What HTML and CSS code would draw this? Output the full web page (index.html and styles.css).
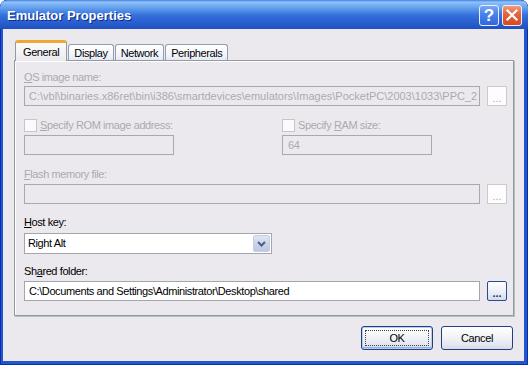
FILE: index.html
```html
<!DOCTYPE html>
<html>
<head>
<meta charset="utf-8">
<link rel="stylesheet" href="styles.css">
</head>
<body>
<div class="window">
  <div class="titlebar">
    <span class="title">Emulator Properties</span>
    <div class="caption-btns">
      <div class="cbtn help">?</div>
      <div class="cbtn close">
        <svg width="18" height="19" viewBox="0 0 18 19"><path d="M4.5 4.5 L13.5 13.5 M13.5 4.5 L4.5 13.5" stroke="#fff" stroke-width="2.2" stroke-linecap="square" fill="none"/></svg>
      </div>
    </div>
  </div>
  <div class="client">
    <div class="tabs">
      <div class="tab active">General</div>
      <div class="tab">Display</div>
      <div class="tab">Network</div>
      <div class="tab">Peripherals</div>
    </div>
    <div class="panel">
      <div class="group g-os">
        <div class="label disabled"><u>O</u>S image name:</div>
        <div class="row">
          <div class="field disabled path">C:\vbl\binaries.x86ret\bin\i386\smartdevices\emulators\Images\PocketPC\2003\1033\PPC_2</div>
          <div class="browse disabled">...</div>
        </div>
      </div>
      <div class="group g-mem">
        <div class="col">
          <div class="check-row"><span class="checkbox"></span><span class="label disabled"><u>S</u>pecify ROM image address:</span></div>
          <div class="field short disabled"></div>
        </div>
        <div class="col">
          <div class="check-row"><span class="checkbox"></span><span class="label disabled">Specify <u>R</u>AM size:</span></div>
          <div class="field short disabled">64</div>
        </div>
      </div>
      <div class="group g-flash">
        <div class="label disabled"><u>F</u>lash memory file:</div>
        <div class="row">
          <div class="field disabled"></div>
          <div class="browse disabled">...</div>
        </div>
      </div>
      <div class="group g-host">
        <div class="label"><u>H</u>ost key:</div>
        <div class="combo">
          <span class="combo-text">Right Alt</span>
          <span class="combo-btn">
            <svg width="9" height="6" viewBox="0 0 9 6"><path d="M1 1 L4.5 4.5 L8 1" stroke="#4d5f82" stroke-width="2" fill="none"/></svg>
          </span>
        </div>
      </div>
      <div class="group g-shared">
        <div class="label">Sh<u>a</u>red folder:</div>
        <div class="row">
          <div class="field enabled">C:\Documents and Settings\Administrator\Desktop\shared</div>
          <div class="browse enabled">...</div>
        </div>
      </div>
    </div>
    <div class="buttons">
      <div class="btn default"><span class="focus">OK</span></div>
      <div class="btn">Cancel</div>
    </div>
  </div>
</div>
</body>
</html>
```
FILE: styles.css
```css
* { box-sizing: border-box; }
html, body { margin: 0; padding: 0; background: #ffffff; }
body { font-family: "Liberation Sans", Arial, sans-serif; font-size: 11px; letter-spacing: -0.4px; color: #000; }

.window {
  width: 528px;
  height: 365px;
  display: flex;
  flex-direction: column;
  background: #2256cf;
  border-radius: 7px 7px 0 0;
  box-shadow: inset 0 0 0 1px #0a2fa8;
  overflow: hidden;
}

.titlebar {
  height: 29px;
  flex: none;
  display: flex;
  align-items: center;
  padding: 2px 6px 0 7px;
  background: linear-gradient(to bottom, #3b7fe8 0px, #93c2f6 2px, #80b5f3 4px, #6aa5ef 7px, #4d8ce6 11px, #3771dc 15px, #2c63d3 20px, #2659ca 25px, #1f4fbd 29px);
  border-radius: 7px 7px 0 0;
}
.title {
  flex: 1;
  color: #fff;
  font-weight: bold;
  font-size: 13px;
  letter-spacing: 0;
  text-shadow: 1px 1px 0 #0b2a86;
}
.caption-btns { display: flex; gap: 3px; }
.cbtn {
  width: 20px;
  height: 21px;
  border: 1px solid #e9f0fd;
  border-radius: 3px;
  display: flex;
  align-items: center;
  justify-content: center;
  color: #fff;
  letter-spacing: 0;
}
.help {
  background: linear-gradient(to bottom, #7aa8f4 0%, #4c85ea 40%, #2e67dc 100%);
  font-weight: bold;
  font-size: 17px;
  line-height: 19px;
}
.close {
  background: linear-gradient(to bottom, #f29a7d 0%, #e5663f 40%, #d7491f 100%);
}

.client {
  flex: 1;
  margin: 0 4px 4px 3px;
  background: #ebe9ed;
  padding: 11px 10px 0 11px;
  display: flex;
  flex-direction: column;
}

.tabs {
  display: flex;
  align-items: flex-end;
  gap: 1px;
  height: 21px;
  margin-left: 1px;
  margin-bottom: -1px;
}
.tab {
  height: 17px;
  line-height: 16px;
  padding: 0 5px;
  border: 1px solid #939dae;
  border-bottom: none;
  border-radius: 3px 3px 0 0;
  background: linear-gradient(to bottom, #ffffff 0%, #f6f7fb 50%, #e1e8f5 100%);
  color: #000;
}
.tab.active {
  height: 21px;
  line-height: 18px;
  padding: 0 7px;
  position: relative;
  z-index: 1;
  border-color: #919b9c;
  border-top: 3px solid #f3a632;
  background: linear-gradient(to bottom, #fcfcfe 0%, #ebe9ed 100%);
}

.panel {
  width: 500px;
  height: 256px;
  border: 1px solid #919b9c;
  box-shadow: inset 1px 1px 0 #fff, 1px 1px 0 #b8bcc4;
  padding: 9px 6px 0 9px;
  display: flex;
  flex-direction: column;
}

.group { display: flex; flex-direction: column; gap: 3px; }
.g-os { gap: 2px; }
.g-mem { margin-top: 12px; display: grid; grid-template-columns: 255px 1fr; }
.g-flash { margin-top: 12px; }
.g-host { margin-top: 11px; gap: 4px; }
.g-shared { margin-top: 10px; }
.col { display: flex; flex-direction: column; gap: 3px; }

.label { line-height: 14px; height: 14px; white-space: nowrap; }
.disabled { color: #aca9ae; }

.check-row { display: flex; align-items: center; gap: 3px; height: 14px; }
.checkbox {
  width: 13px;
  height: 13px;
  border: 1px solid #c6c5ca;
  background: #fafafc;
}

.row { display: flex; gap: 7px; }
.field {
  flex: 1;
  height: 20px;
  line-height: 18px;
  border: 1px solid #a9a8ad;
  padding: 0 4px;
  white-space: nowrap;
  overflow: hidden;
}
.field.path { letter-spacing: 0; }
.field.disabled { background: #ebe9ed; border-color: #a9a8ad; }
.field.enabled { background: #fff; border-color: #a4a6ab; color: #000; }
.field.short { flex: none; width: 150px; padding-left: 5px; }

.browse {
  width: 20px;
  height: 20px;
  flex: none;
  text-align: center;
  line-height: 22px;
  font-size: 11px;
  letter-spacing: 0;
}
.browse.disabled {
  background: #fdfdfd;
  border: 1px solid #cbcace;
  color: #aca9ae;
}
.browse.enabled {
  border: 1px solid #2a4b8f;
  border-radius: 2px;
  background: linear-gradient(to bottom, #ffffff 0%, #eef1f8 50%, #d4dcec 100%);
  color: #1b2d6e;
  font-weight: bold;
}

.combo {
  width: 248px;
  height: 21px;
  border: 1px solid #a4a6ab;
  background: #fff;
  display: flex;
  align-items: stretch;
  padding: 1px;
}
.combo-text { flex: 1; line-height: 17px; padding-left: 2px; }
.combo-btn {
  width: 17px;
  flex: none;
  border: 1px solid #c5cfe3;
  border-radius: 2px;
  background: linear-gradient(to bottom, #dfe6f4 0%, #cbd5ea 50%, #bcc8e2 100%);
  display: flex;
  align-items: center;
  justify-content: center;
}

.buttons {
  display: flex;
  justify-content: flex-end;
  gap: 8px;
  margin-top: 10px;
  margin-right: 1px;
}
.btn {
  width: 72px;
  height: 24px;
  border: 1px solid #1f3f80;
  border-radius: 3px;
  background: linear-gradient(to bottom, #ffffff 0%, #f4f5f9 40%, #e4e7f0 80%, #d6dbe8 100%);
  display: flex;
  align-items: center;
  justify-content: center;
  font-size: 11px;
}
.btn.default {
  box-shadow: inset 0 0 0 1px #b7cdf2, inset 0 -1px 0 1px #8fb0e6;
  padding: 3px;
}
.btn .focus {
  width: 100%;
  height: 100%;
  border: 1px dotted #404040;
  display: flex;
  align-items: center;
  justify-content: center;
}
```
